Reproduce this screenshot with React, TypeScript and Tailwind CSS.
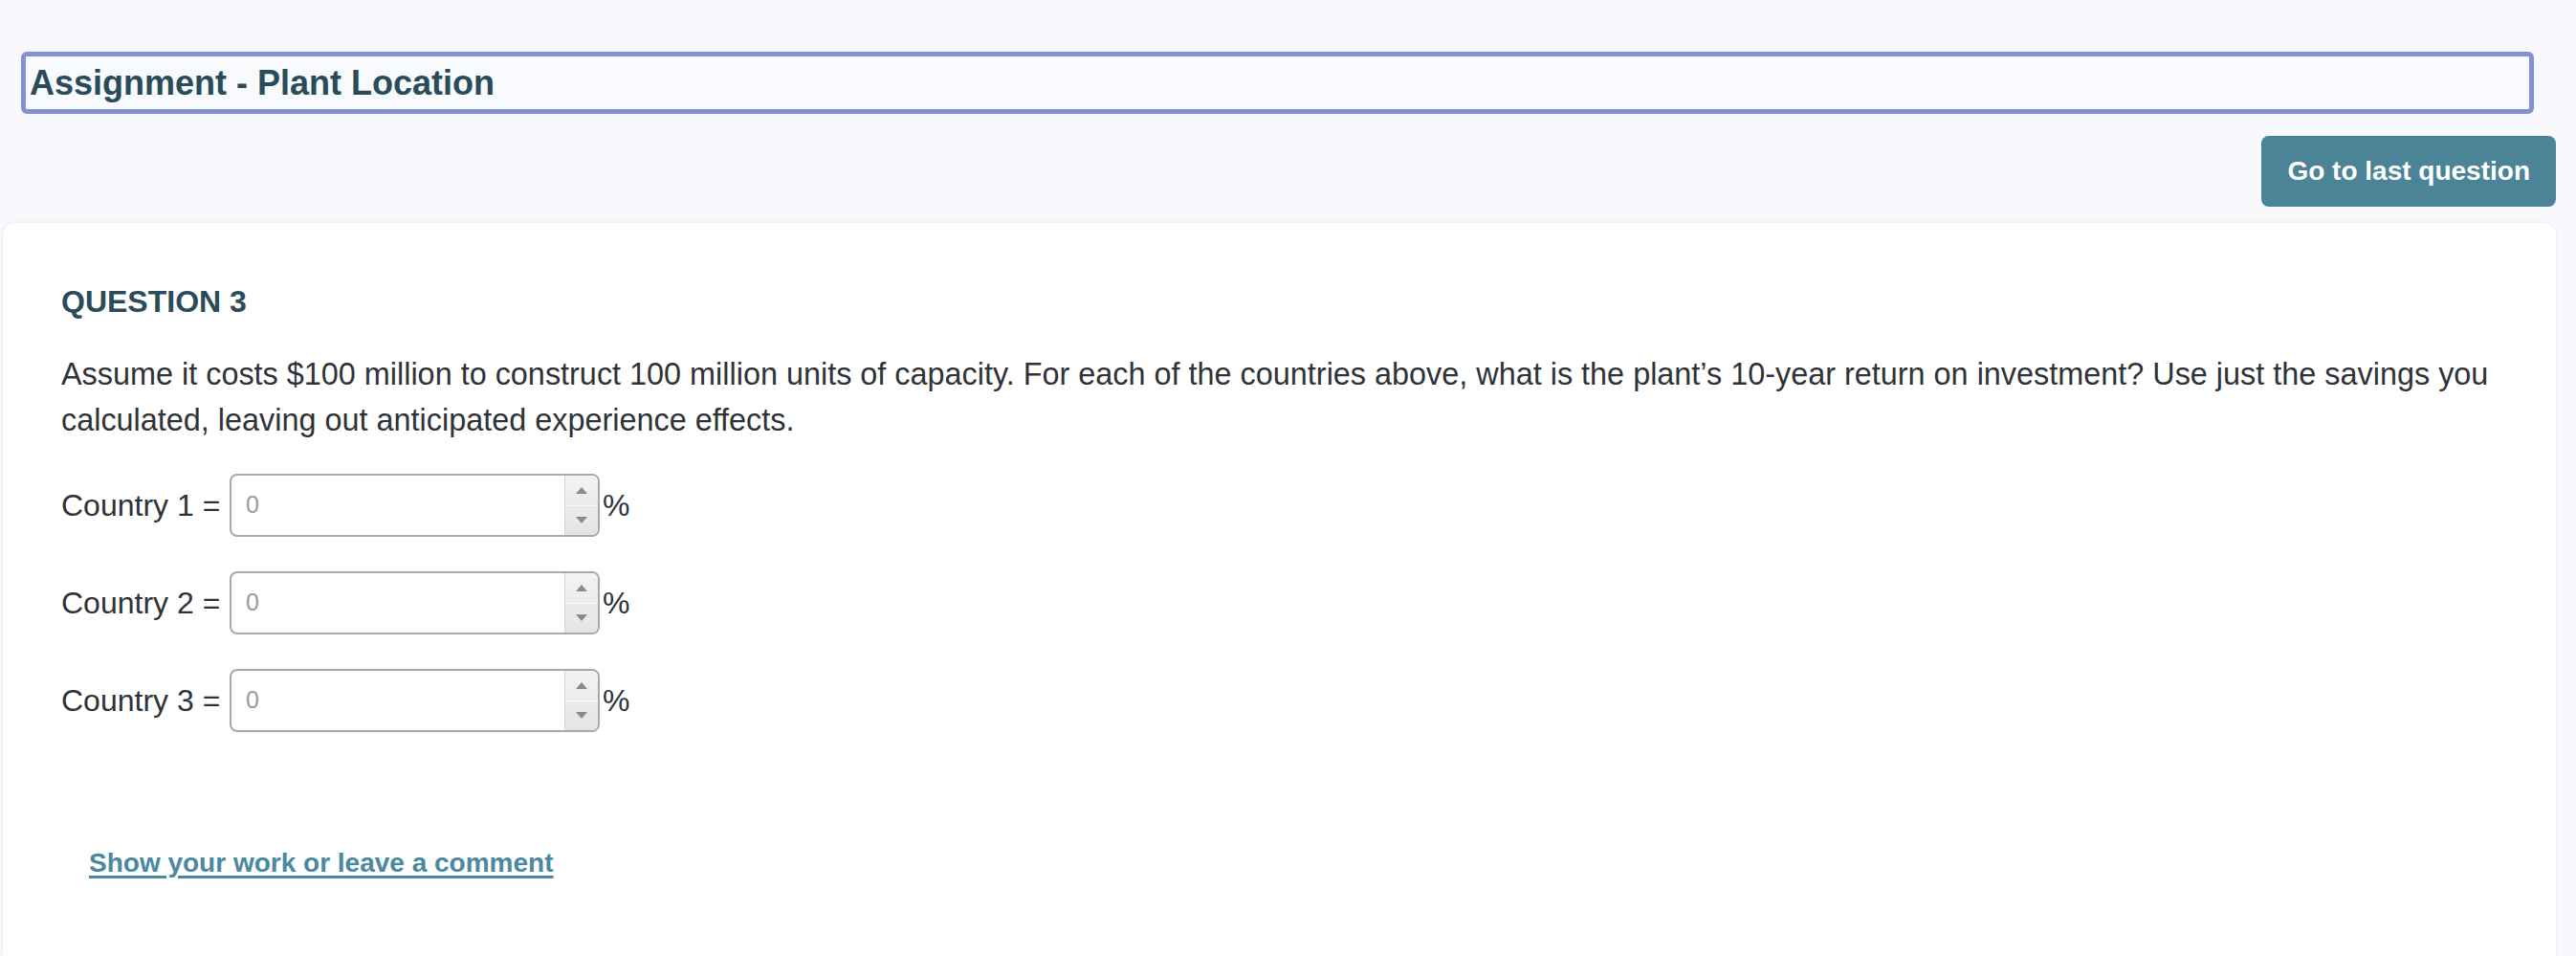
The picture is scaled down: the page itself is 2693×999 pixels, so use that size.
import { useState } from "react";

const countries = ["Country 1", "Country 2", "Country 3"];

function Spinner() {
    return (
        <div className="flex flex-col w-[35px] h-full border-l border-[#d4d4d4] bg-gradient-to-b from-[#f3f3f3] to-[#e4e4e4] rounded-r-[6px]">
            <div className="flex flex-1 items-center justify-center border-b border-[#f8f8f8]">
                <svg width="12" height="7" viewBox="0 0 12 7">
                    <path d="M6 0 L12 7 L0 7 Z" fill="#8a8a8a" />
                </svg>
            </div>
            <div className="flex flex-1 items-center justify-center">
                <svg width="12" height="7" viewBox="0 0 12 7">
                    <path d="M0 0 L12 0 L6 7 Z" fill="#8a8a8a" />
                </svg>
            </div>
        </div>
    );
}

function App() {
    const [values, setValues] = useState<string[]>(["", "", ""]);

    return (
        <div className="bg-[#f8f9fd] w-full min-h-screen font-['Liberation_Sans',Arial,sans-serif] flex flex-col">
            <div className="pl-[22px] pr-[44px] pt-[54px]">
                <div className="h-[65px] border-[5px] border-[#8490d4] rounded-[6px] flex items-center pl-[4px] bg-[#f9fafe]">
                    <h1 className="text-[36px] font-bold text-[#2a4b59] leading-none">Assignment - Plant Location</h1>
                </div>
            </div>

            <div className="flex flex-row justify-end pr-[21px] mt-[23px]">
                <button className="h-[74px] px-[27px] rounded-[8px] bg-[#4b8397] text-white text-[28px] font-bold">
                    Go to last question
                </button>
            </div>

            <div className="flex flex-col flex-1 ml-[3px] mr-[21px] mt-[17px] bg-white rounded-t-[13px] shadow-[0_0_4px_rgba(0,0,0,0.07)] pl-[61px] pr-[40px] pt-[58px] pb-[60px]">
                <h2 className="text-[32px] leading-[48px] font-bold text-[#2a4b59]">QUESTION 3</h2>
                <p className="mt-[28px] text-[32.4px] leading-[48px] text-[#2f3337]">
                    Assume it costs $100 million to construct 100 million units of capacity. For each of the countries above, what is the plant’s 10-year return on investment? Use just the savings you calculated, leaving out anticipated experience effects.
                </p>

                <div className="flex flex-col gap-[36px] mt-[32px]">
                    {countries.map((c, i) => (
                        <div key={c} className="flex flex-row items-center text-[32px] text-[#2f3337]">
                            <span className="w-[176px]">{c} =</span>
                            <div className="flex flex-row w-[387px] h-[66px] border-2 border-[#a9a9a9] rounded-[8px] bg-white">
                                <input
                                    type="text"
                                    placeholder="0"
                                    value={values[i]}
                                    onChange={(e) => {
                                        const next = [...values];
                                        next[i] = e.target.value;
                                        setValues(next);
                                    }}
                                    className="flex-1 min-w-0 pl-[15px] text-[25px] outline-none bg-transparent placeholder:text-[#9b9b9b]"
                                />
                                <Spinner />
                            </div>
                            <span className="ml-[3px]">%</span>
                        </div>
                    ))}
                </div>

                <a href="#" className="mt-[116px] ml-[29px] text-[28px] leading-[42px] font-bold text-[#4a89a0] underline decoration-[3px] underline-offset-[4px] w-fit">
                    Show your work or leave a comment
                </a>
            </div>
        </div>
    );
}

export default App;
